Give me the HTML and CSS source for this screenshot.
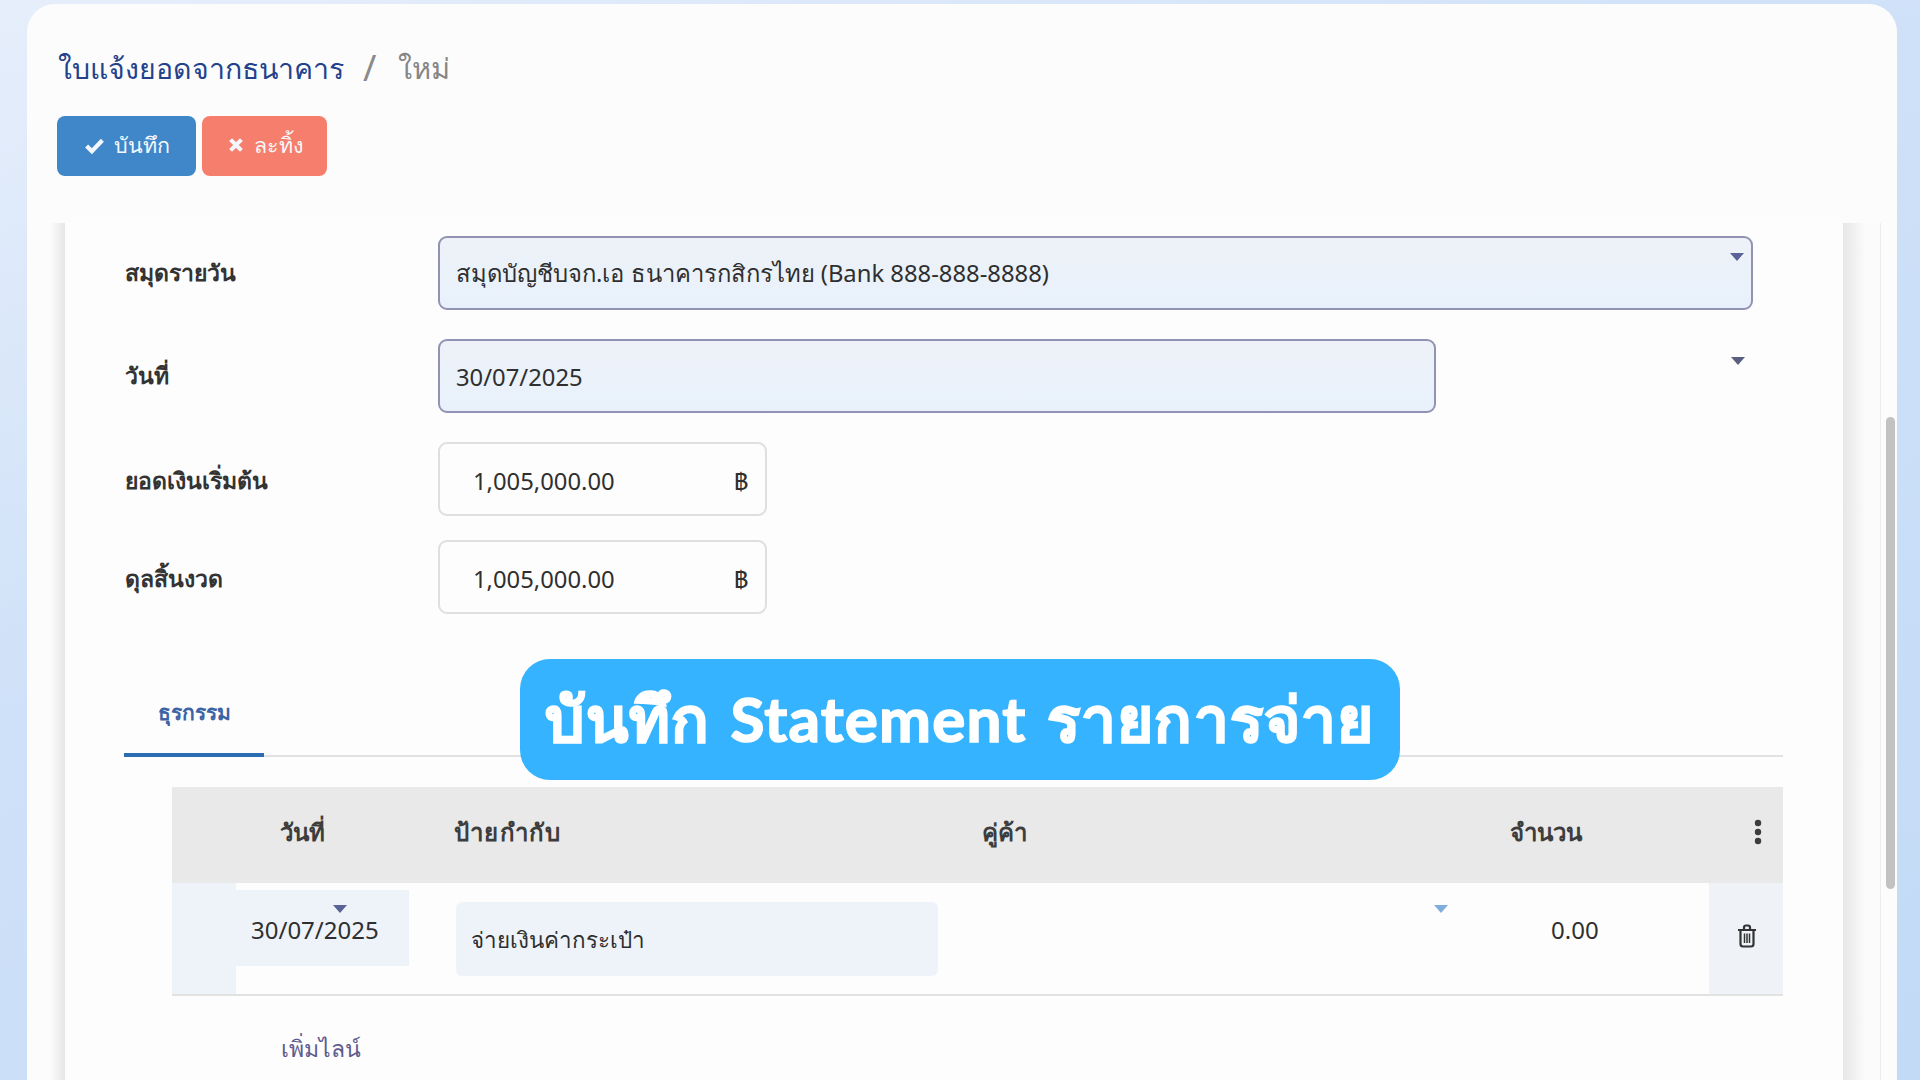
FILE: index.html
```html
<!DOCTYPE html>
<html lang="th">
<head>
<meta charset="utf-8">
<title>ใบแจ้งยอดจากธนาคาร</title>
<link rel="stylesheet" href="styles.css">
</head>
<body>
<main class="card">
  <header class="control">
    <h1 class="crumbs"><span class="crumb-link">ใบแจ้งยอดจากธนาคาร</span><span class="crumb-sep">/</span><span class="crumb-now">ใหม่</span></h1>
    <div class="actions">
      <button class="btn btn-save"><svg class="btn-icon" viewBox="0 0 20 20"><path d="M2.5 10.500 7.500 15.500 17.500 5" fill="none" stroke="currentColor" stroke-width="4"/></svg>บันทึก</button>
      <button class="btn btn-discard"><svg class="btn-icon btn-icon-x" viewBox="0 0 20 20"><path d="M4 4 16 16M16 4 4 16" fill="none" stroke="currentColor" stroke-width="4.500"/></svg>ละทิ้ง</button>
    </div>
  </header>
  <div class="workspace">
    <div class="gutter gutter-left"></div>
    <section class="sheet">
      <div class="row row-a">
        <label class="label">สมุดรายวัน</label>
        <div class="field field-select"><span>สมุดบัญชีบจก.เอ ธนาคารกสิกรไทย (Bank 888-888-8888)</span><i class="caret caret-one"></i></div>
      </div>
      <div class="row row-a row-date">
        <label class="label">วันที่</label>
        <div class="field field-date"><span>30/07/2025</span></div>
        <i class="caret caret-two"></i>
      </div>
      <div class="row row-b">
        <label class="label label-low">ยอดเงินเริ่มต้น</label>
        <div class="field field-money"><span>1,005,000.00</span><span>฿</span></div>
      </div>
      <div class="row">
        <label class="label label-low">ดุลสิ้นงวด</label>
        <div class="field field-money"><span>1,005,000.00</span><span>฿</span></div>
      </div>
      <nav class="tabs"><a class="tab">ธุรกรรม</a></nav>
      <div class="lines">
        <div class="thead">
          <div class="th th-date">วันที่</div>
          <div class="th th-tag">ป้ายกำกับ</div>
          <div class="th th-partner">คู่ค้า</div>
          <div class="th th-amount">จำนวน</div>
          <div class="th th-more"><svg viewBox="0 0 8 26" class="dots"><circle cx="4" cy="4" r="3.200"/><circle cx="4" cy="13" r="3.200"/><circle cx="4" cy="22" r="3.200"/></svg></div>
        </div>
        <div class="tr">
          <div class="td-handle"></div>
          <div class="td-date"><span>30/07/2025</span><i class="caret caret-date"></i></div>
          <div class="td-tag">จ่ายเงินค่ากระเป๋า</div>
          <div class="td-partner"><i class="caret caret-partner"></i></div>
          <div class="td-amount">0.00</div>
          <div class="td-del"><svg class="trash" viewBox="0 0 20 24"><path d="M1 6H19M7 6V3.500Q7 1.500 9 1.500H11Q13 1.500 13 3.500V6M3.500 6V20Q3.500 22.500 6 22.500H14Q16.500 22.500 16.500 20V6" fill="none" stroke="currentColor" stroke-width="2.200"/><path d="M7.500 9.500V19M10 9.500V19M12.500 9.500V19" fill="none" stroke="currentColor" stroke-width="1.500"/></svg></div>
        </div>
        <a class="add-line">เพิ่มไลน์</a>
      </div>
    </section>
    <div class="gutter gutter-right"></div>
    <div class="scroll"><div class="thumb"></div></div>
  </div>
</main>
<div class="banner">บันทึก Statement รายการจ่าย</div>
</body>
</html>
```

FILE: styles.css
```css
* { box-sizing: border-box; }
html, body { height: 100%; }
body {
  margin: 0;
  height: 1080px;
  overflow: hidden;
  padding: 4px 23px 0 27px;
  background: linear-gradient(160deg, #e6eefb 0%, #cfe1f8 40%, #c2daf6 100%);
  font-family: "Noto Sans", "Open Sans", sans-serif;
  color: #2e2e2e;
  position: relative;
}
.card {
  height: 1076px;
  background: #fcfcfc;
  border-radius: 28px 28px 0 0;
  display: flex;
  flex-direction: column;
}
.control { height: 219px; padding: 38px 29px 0 30px; flex: none; }
.crumbs { margin: 0 0 0 1px; height: 52px; font-size: 28.5px; font-weight: 500; line-height: 52px; display: flex; }
.crumb-link { color: #24428c; }
.crumb-sep { color: #8a8a8a; margin: 0 22px 0 19px; font-size: 36px; font-weight: 400; }
.crumb-now { color: #868686; font-size: 29px; }
.actions { margin-top: 22px; display: flex; gap: 6px; }
.btn {
  height: 60px;
  border: 0;
  border-radius: 8px;
  color: #f4f8fc;
  font: 500 21.5px "Noto Sans", sans-serif;
  display: flex;
  align-items: center;
  justify-content: center;
  gap: 9px;
  padding: 0 0 2px;
}
.btn-save { width: 139px; background: #3f87c9; }
.btn-discard { width: 125px; background: #f67e6c; }
.btn-icon { width: 21px; height: 21px; }
.btn-icon-x { width: 18px; height: 18px; }

.workspace { flex: 1; display: flex; min-height: 0; padding-left: 24px; }
.gutter { flex: none; }
.gutter-left { width: 14px; background: linear-gradient(90deg, #fbfbfb, #e6e6e6); }
.gutter-right { width: 38px; background: linear-gradient(90deg, #e6e6e6, #fbfbfb 60%); border-right: 1px solid #ececec; }
.sheet { width: 1778px; padding: 13px 60px 0 59px; background: #fdfdfd; position: relative; }
.scroll { width: 16px; position: relative; }
.thumb { position: absolute; left: 5px; top: 194px; width: 9px; height: 472px; border-radius: 5px; background: #c2c2c2; }

.row { display: flex; align-items: center; height: 74px; position: relative; }
.row-a { margin-bottom: 29px; }
.row-b { margin-bottom: 24px; }
.label { width: 313px; margin-left: 1px; flex: none; font-size: 23px; font-weight: 700; color: #333; }
.label-low { padding-top: 3px; }
.field { height: 74px; border-radius: 9px; display: flex; align-items: center; font-size: 23.8px; color: #2f2f2f; position: relative; }
.field-select { width: 1315px; padding-left: 16px; background: linear-gradient(180deg, #eef2f8, #e8f1fb); border: 2px solid #9292b4; }
.field-date { width: 998px; padding: 2px 0 0 16px; background: linear-gradient(180deg, #eef2f8, #e8f1fb); border: 2px solid #9292b4; }
.field-money { width: 329px; padding: 4px 16px 0 33px; justify-content: space-between; border: 2px solid #dfdfdf; background: #fdfdfd; }

.caret { position: absolute; width: 0; height: 0; border-left: 7px solid transparent; border-right: 7px solid transparent; border-top: 8px solid #5a6296; }
.caret-one { right: 7px; top: 15px; }
.caret-two { left: 1607px; top: 18px; border-top-color: #5a5f80; }
.caret-date { left: 97px; top: 15px; }
.caret-partner { left: 496px; top: 22px; border-top-color: #7faedd; }

.tabs { margin-top: 66px; height: 77px; border-bottom: 2px solid #e2e2e2; display: flex; }
.tab { width: 140px; height: 77px; text-align: center; line-height: 64px; font-size: 21px; font-weight: 700; color: #3c64a5; border-bottom: 4px solid #2c6db2; }

.lines { margin: 30px 0 0 48px; }
.thead { height: 96px; background: #e9e9e9; display: flex; font-size: 24px; font-weight: 700; color: #3d3d3d; line-height: 90px; }
.th-date { width: 282px; padding-left: 108px; }
.th-tag { width: 528px; letter-spacing: 1.2px; }
.th-partner { width: 528px; }
.th-amount { width: 244px; }
.th-more { display: flex; align-items: center; padding-bottom: 6px; }
.dots { width: 8px; height: 26px; fill: #3d3d3d; }

.tr { height: 113px; border-bottom: 2px solid #e2e2e2; display: flex; font-size: 24px; color: #2f2f2f; position: relative; }
.td-handle { width: 64px; background: #eef3fa; }
.td-date { width: 173px; height: 76px; margin-top: 7px; padding: 23px 0 0 15px; background: #eef3fa; position: relative; }
.td-tag { width: 482px; height: 74px; margin: 19px 0 0 47px; padding: 20px 0 0 15px; background: #eef3fa; border-radius: 6px; font-size: 22.4px; }
.td-partner { width: 522px; position: relative; }
.td-amount { width: 249px; padding: 30px 0 0 91px; }
.td-del { width: 74px; background: #eff3f8; display: flex; align-items: center; justify-content: center; color: #333; }
.trash { width: 20px; height: 24px; margin: 0 0 6px 2px; }

.add-line { display: block; margin: 35px 0 0 109px; font-size: 23px; color: #5d5c8e; }

.banner {
  position: absolute;
  left: 520px;
  top: 659px;
  width: 880px;
  height: 121px;
  border-radius: 30px;
  background: #36b3ff;
  color: #fff;
  font-family: Lato, "Noto Sans", sans-serif;
  font-size: 62px;
  font-weight: 700;
  letter-spacing: 1.2px;
  word-spacing: 4px;
  -webkit-text-stroke: 1.6px #fff;
  display: flex;
  align-items: center;
  justify-content: center;
}
```
